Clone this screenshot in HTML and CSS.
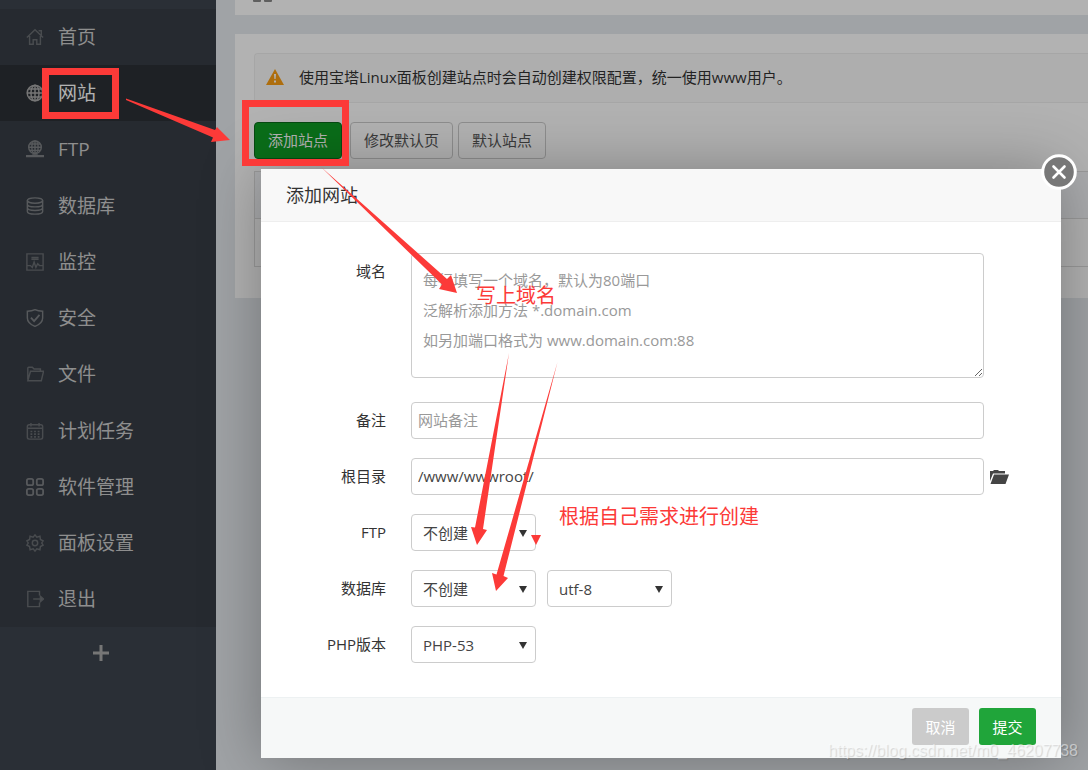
FILE: index.html
```html
<!DOCTYPE html>
<html lang="zh-CN">
<head>
<meta charset="utf-8">
<title>添加网站</title>
<link rel="stylesheet" href="styles.css">
</head>
<body>
<div class="app">
  <nav class="sidebar">
    <ul class="menu">
      <li><a class="menu-item" href="#"><svg class="icon dim" viewBox="0 0 20 20"><path d="M1 10.500 10 2l9 8.500M14 3h3v5M4 9v9h4v-5h4v5h4V9"/></svg>首页</a></li>
      <li><a class="menu-item active" href="#"><svg class="icon" viewBox="0 0 20 20"><circle cx="10" cy="10" r="8.700"/><ellipse cx="10" cy="10" rx="4.500" ry="8.700"/><path d="M10 1v18M1 10h18M3 5.500h14M3 14.500h14"/></svg>网站</a></li>
      <li><a class="menu-item" href="#"><svg class="icon" viewBox="0 0 20 20"><circle cx="10" cy="8" r="7"/><ellipse cx="10" cy="8" rx="3.500" ry="7"/><path d="M10 1v14M3 8h14M4 4.500h12M4 11.500h12"/><path d="M0 18h20M7 17h6" stroke-width="2.400"/></svg>FTP</a></li>
      <li><a class="menu-item" href="#"><svg class="icon" viewBox="0 0 20 20"><ellipse cx="10" cy="4" rx="8.500" ry="3"/><path d="M1.500 4v12c0 4 17 4 17 0V4M1.500 8c0 4 17 4 17 0M1.500 12c0 4 17 4 17 0"/></svg>数据库</a></li>
      <li><a class="menu-item" href="#"><svg class="icon dim" viewBox="0 0 20 20"><path d="M1 1h18v18H1zM6 5h8M6 7h8M1 14h4l2 2 2-6 2 6 2-4 2 2h4"/></svg>监控</a></li>
      <li><a class="menu-item" href="#"><svg class="icon" viewBox="0 0 20 20"><path d="M10 .8C7 2.300 4 2.500 1.500 2.500V10c0 5 4 7.500 8.500 9.300 4.500-1.800 8.500-4.300 8.500-9.300V2.500C16 2.500 13 2.300 10 .8Z"/><path d="m5.500 9.500 3.500 4 6-7" stroke-width="2"/></svg>安全</a></li>
      <li><a class="menu-item" href="#"><svg class="icon dim" viewBox="0 0 20 20"><path d="M2 16V3.500Q2 2.500 3 2.500h4l2 2h7v2.500M5 7h14.500L17 17.500H2z"/></svg>文件</a></li>
      <li><a class="menu-item" href="#"><svg class="icon dim" viewBox="0 0 20 20"><rect x="1.500" y="3" width="17" height="16" rx="2"/><path d="M1.500 7h17M5.500 1v4M14.500 1v4"/><path d="M5 10.500h10M5 13.500h10M5 16.500h10" stroke-dasharray="2 2" stroke-width="1.800"/></svg>计划任务</a></li>
      <li><a class="menu-item" href="#"><svg class="icon" viewBox="0 0 20 20"><g stroke-width="2"><rect x="1" y="1" width="7" height="7" rx="2"/><rect x="12" y="1" width="7" height="7" rx="2"/><rect x="1" y="12" width="7" height="7" rx="2"/><rect x="12" y="12" width="7" height="7" rx="2"/></g></svg>软件管理</a></li>
      <li><a class="menu-item" href="#"><svg class="icon dim" viewBox="0 0 20 20"><path d="M8 3.500 10 1l2 2.500 3.500-1 .5 3.500 3 1.500L17.500 10l1.500 2.500-3 1.500-.5 3.500-3.500-1L10 19l-2-2.500-3.500 1L4 14l-3-1.500L2.500 10 1 7.500 4 6l.5-3.500z"/><circle cx="10" cy="10" r="3"/></svg>面板设置</a></li>
      <li><a class="menu-item" href="#"><svg class="icon dim" viewBox="0 0 20 20"><path d="M15 6V1.500H2v17h13V14" /><path d="M8 10h9"/><path d="m16 7 3.500 3-3.500 3z" fill="#70747a"/></svg>退出</a></li>
    </ul>
    <button class="menu-add" type="button" aria-label="添加菜单"><svg viewBox="0 0 16 16"><path d="M8 0v16M0 8h16"/></svg></button>
  </nav>
  <main class="content">
    <div class="topbar"><svg class="crumb" viewBox="0 0 20 3"><path d="M0 0h8v1q0 1-1 1H1Q0 2 0 1zM11 0h8v1q0 1-1 1h-6q-1 0-1-1z"/></svg></div>
    <section class="panel">
      <div class="notice">
        <svg class="warn" viewBox="0 0 18 16"><path d="M9 0 18 16H0z" fill="#fa9e15"/><path d="M8 5h2l-.4 5H8.400zM8 11.500h2v2H8z" fill="#fff"/></svg>
        <p>使用宝塔Linux面板创建站点时会自动创建权限配置，统一使用www用户。</p>
      </div>
      <div class="toolbar">
        <button class="btn btn-add" type="button">添加站点</button>
        <button class="btn" type="button">修改默认页</button>
        <button class="btn" type="button">默认站点</button>
      </div>
      <div class="site-list"><div class="list-head"></div><div class="list-row"></div></div>
    </section>
  </main>
</div>
<div class="shade"></div>

<form class="dialog" role="dialog" aria-labelledby="dialog-title">
  <header class="dialog-head"><h1 id="dialog-title">添加网站</h1></header>
  <button class="close" type="button" aria-label="关闭"><svg viewBox="0 0 36 36"><circle cx="18" cy="18" r="16.300" fill="#787878" stroke="#fff" stroke-width="3"/><path d="m12.500 12.500 11 11M23.500 12.500l-11 11" stroke="#fff" stroke-width="2.600"/></svg></button>
  <div class="fields">
    <div class="field field-tall">
      <label for="domain">域名</label>
      <textarea class="control" id="domain" placeholder="每行填写一个域名，默认为80端口&#10;泛解析添加方法 *.domain.com&#10;如另加端口格式为 www.domain.com:88"></textarea>
    </div>
    <div class="field">
      <label for="note">备注</label>
      <input class="control" id="note" type="text" placeholder="网站备注">
    </div>
    <div class="field">
      <label for="root">根目录</label>
      <input class="control" id="root" type="text" value="/www/wwwroot/">
      <button class="browse" type="button" aria-label="选择目录"><svg viewBox="0 0 20 16"><path d="M1 12V2h3l1-1h4l1 1h6v2.500H4zM5 5.500h15L16.500 15H1.500z" fill="#444"/></svg></button>
    </div>
    <div class="field">
      <label for="ftp">FTP</label>
      <span class="pick"><select class="control" id="ftp"><option>不创建</option></select></span>
    </div>
    <div class="field">
      <label for="db">数据库</label>
      <div class="picks">
        <span class="pick"><select class="control" id="db"><option>不创建</option></select></span>
        <span class="pick"><select class="control" aria-label="编码"><option>utf-8</option></select></span>
      </div>
    </div>
    <div class="field">
      <label for="php">PHP版本</label>
      <span class="pick"><select class="control" id="php"><option>PHP-53</option></select></span>
    </div>
  </div>
  <footer class="dialog-foot">
    <button class="action cancel" type="button">取消</button>
    <button class="action submit" type="submit">提交</button>
  </footer>
</form>

<div class="notes">
  <svg class="marks" viewBox="0 0 1088 770" width="1088" height="770">
    <g fill="none" stroke="#fc3a38" stroke-width="7"><rect x="45.500" y="71.500" width="70" height="44"/><rect x="245.500" y="103.500" width="100" height="59"/></g>
    <g fill="#fc3a38">
      <path d="M126 98.500 215 130 217 127 230 140 211 142 213 137.500 126 100z"/>
      <path d="M320.500 166.500 447 279 451 275 457 293 439 289 442 284.500z"/>
      <path d="M509 353 483 529 487 530 477 545 471 527 475 527.500z"/>
      <path d="M557.500 362 503.500 576 508 578 496 591 492 573 496.500 574.500z"/>
      <path d="M531 535h10l-5 10z"/>
    </g>
  </svg>
  <p class="note note-domain">写上域名</p>
  <p class="note note-create">根据自己需求进行创建</p>
  <p class="watermark">https://blog.csdn.net/m0_46207738</p>
</div>
</body>
</html>
```
FILE: styles.css
```css
* { box-sizing: border-box; }
body, h1, p, ul { margin: 0; padding: 0; }
body {
  font: 15px/20px "Open Sans", "Noto Sans CJK SC", sans-serif;
  color: #333;
  min-height: 100vh;
  overflow: hidden;
  position: relative;
}
button, input, select, textarea { font: inherit; color: inherit; }
button { padding: 0; border: 0; background: none; }

.app { display: flex; min-height: 100vh; background: #e5eaee; }
.sidebar { flex: 0 0 216px; padding-top: 9px; background: #3d444e; }
.menu { list-style: none; }
.menu li { padding-bottom: 0; background: #373d45; }
.menu li:nth-child(3), .menu li:nth-child(7) { padding-bottom: 1px; }
.menu-item {
  display: flex;
  align-items: center;
  gap: 14px;
  height: 56px;
  padding-left: 26px;
  color: #ccc;
  font-size: 19px;
  text-decoration: none;
}
.menu-item.active { background: #2c3035; color: #fff; }
.icon { width: 18px; height: 18px; fill: none; stroke: #7d8084; stroke-width: 1.600; }
.icon.dim { stroke: #696d72; }
.active .icon { stroke: #aaa; }
.menu-add { display: block; width: 201px; height: 48px; }
.menu-add svg { width: 16px; height: 16px; stroke: #aaa; stroke-width: 3; vertical-align: middle; }

.content { flex: 1; min-width: 0; padding-left: 19px; }
.topbar { height: 15px; padding-left: 18px; background: #fff; }
.crumb { display: block; width: 20px; height: 3px; fill: #888; }
.panel { margin-top: 19px; padding: 19px 0 31px 19px; background: #fff; }
.notice {
  display: flex;
  align-items: center;
  gap: 15px;
  height: 50px;
  padding: 0 0 2px 11px;
  border: 1px solid #eee;
  border-right: 0;
  border-radius: 4px 0 0 4px;
  background: #fafafa;
  color: #333;
}
.warn { width: 18px; height: 16px; }
.toolbar { display: flex; gap: 5px; margin: 19px 0 12px; }
.btn {
  height: 37px;
  padding: 0 13px 2px;
  border: 1px solid #ccc;
  border-radius: 4px;
  color: #555;
}
.btn-add { margin-right: 3px; border-color: #0b6a1b; background: #0f9e24; color: #fff; }
.site-list { border: 1px solid #ddd; border-right: 0; }
.list-head { height: 47px; border-bottom: 1px solid #ddd; background: #f5f6fa; }
.list-row { height: 47px; }

.shade { position: absolute; inset: 0; background: rgba(0, 0, 0, .3); }

.dialog {
  position: absolute;
  top: 169px;
  left: 261px;
  right: 27px;
  border-radius: 2px;
  background: #fff;
  box-shadow: 1px 1px 63px rgba(0, 0, 0, .3);
}
.dialog-head { padding: 16px 25px; border-bottom: 1px solid #eee; background: #f8f8f8; }
.dialog-head h1 { font-size: 18px; font-weight: 400; line-height: 20px; }
.close { position: absolute; top: -15px; right: -16px; width: 36px; height: 36px; }
.close svg { display: block; fill: none; stroke-linecap: round; }

.fields { display: flex; flex-direction: column; gap: 19px; padding: 31px 25px 34px; }
.field { display: grid; grid-template-columns: 100px 1fr 52px; align-items: center; }
.field label { padding-bottom: 2px; text-align: right; }
.field .control, .picks { margin-left: 25px; }
.field-tall { align-items: start; margin-bottom: 5px; }
.field-tall label { padding-top: 8px; }
.control {
  height: 37px;
  padding: 0 6px 1px;
  border: 1px solid #ccc;
  border-radius: 4px;
  background: #fff;
  color: #444;
}
.control::placeholder { color: #999; }
textarea.control { display: block; height: 125px; padding: 11px; line-height: 30px; }
.pick { position: relative; justify-self: start; }
.pick .control { display: block; width: 125px; padding: 0 11px; appearance: none; }
.pick::after {
  content: "";
  position: absolute;
  right: 9px;
  top: 16px;
  border: 4px solid transparent;
  border-top: 7px solid #333;
  border-bottom: 0;
  pointer-events: none;
}
.picks { display: flex; gap: 11px; }
.picks .control { margin-left: 0; }
.browse { justify-self: start; margin-left: 5px; width: 20px; height: 16px; }
.browse svg { display: block; }

.dialog-foot {
  display: flex;
  justify-content: flex-end;
  gap: 10px;
  padding: 10px 25px 13px;
  border-top: 1px solid #edf1f2;
  background: #f6f8f8;
}
.action { width: 57px; height: 37px; border-radius: 3px; color: #fff; }
.cancel { background: #cbcbcb; }
.submit { background: #20a53a; }

.notes { position: absolute; inset: 0; pointer-events: none; }
.marks { position: absolute; top: 0; left: 0; }
.note { position: absolute; color: #fc3a38; font-size: 20px; line-height: 30px; white-space: nowrap; }
.note-domain { left: 476px; top: 281px; }
.note-create { left: 559px; top: 502px; }
.watermark {
  position: absolute;
  right: 10px;
  bottom: 9px;
  font: 16px/20px "Liberation Sans", Arial, sans-serif;
  color: rgba(255, 255, 255, .5);
  text-shadow: 1px 1px 1px rgba(0, 0, 0, .15);
}
```
